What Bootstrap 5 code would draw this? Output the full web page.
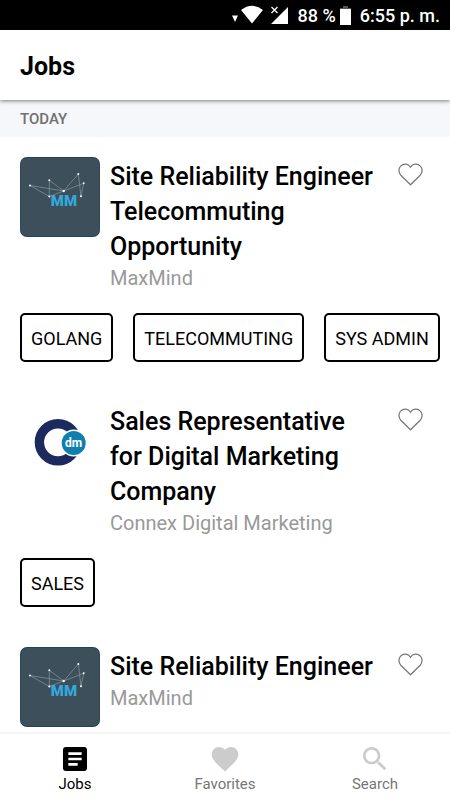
<!DOCTYPE html>
<html lang="en">
<head>
<meta charset="utf-8">
<meta name="viewport" content="width=device-width, initial-scale=1">
<title>Jobs</title>
<link href="https://cdn.jsdelivr.net/npm/bootstrap@5.3.0/dist/css/bootstrap.min.css" rel="stylesheet">
<style>
  body { font-family: Roboto, "Liberation Sans", sans-serif; color: #000; }
  .status-bar { background: #000; color: #fff; height: 30px; padding-right: 10px; font-size: 18px; font-weight: 500; line-height: 30px; }
  .status-bar span { padding-top: 2px; }
  .app-header { padding: 19px 20px 16px; box-shadow: 0 1px 4px rgba(0,0,0,.5); z-index: 1; }
  .app-header h1 { font-size: 25px; line-height: 35px; font-weight: 700; }
  .day-label { background: #f5f7fa; color: #707070; padding: 9px 20px 8px; font-size: 15px; line-height: 20px; font-weight: 500; }
  .job-item { padding: 20px; }
  .job-logo { width: 80px; height: 80px; }
  .job-body { padding-left: 10px; }
  .job-title { font-size: 25px; line-height: 35px; font-weight: 500; padding-top: 2px; }
  .job-company { font-size: 20px; line-height: 29px; color: #999; }
  .like-btn { width: 52px; height: 34px; padding: 0 0 0 20px; }
  .like-btn svg, .tab-link svg { display: block; }
  .tag-list { gap: 20px; padding-top: 20px; }
  .tag-btn { border: 2px solid #000; border-radius: 5px; padding: 11px 9px 9px; font-size: 18px; line-height: 25px; color: #000; white-space: nowrap; --bs-btn-hover-color: #000; }
  .tab-bar { border-top: 2px solid #f5f5f5; height: 68px; }
  .tab-link { color: #767676; font-size: 15px; line-height: 18px; padding-top: 9px; }
  .tab-link.active { color: #000; }
</style>
<script src="https://cdn.jsdelivr.net/npm/bootstrap@5.3.0/dist/js/bootstrap.bundle.min.js" defer></script>
</head>
<body>
<svg class="d-none" aria-hidden="true">
  <symbol id="logo-maxmind" viewBox="0 0 80 80">
    <rect width="80" height="80" rx="7" fill="#1d4552"/>
    <rect x=".5" y="1" width="79" height="78" rx="6" fill="#3c4f5a"/>
    <path d="M10 28.5 29.3 39.5V23.3L43.7 34 10 28.5M43.7 34 58.3 17 61 39.3 63.7 26.3 43.7 34 29.3 39.5" fill="none" stroke="#8b979d" stroke-width=".7"/>
    <g fill="#fff"><circle cx="10" cy="28.5" r="1"/><circle cx="29.3" cy="23.3" r="1"/><circle cx="29.3" cy="39.5" r="1"/><circle cx="43.7" cy="34" r="1.2"/><circle cx="58.3" cy="17" r="1"/><circle cx="63.7" cy="26.3" r="1"/><circle cx="61" cy="39.3" r="1"/></g>
    <text x="44" y="48.5" text-anchor="middle" font-family="Roboto, sans-serif" font-weight="900" font-size="15" fill="#35a8dc">MM</text>
  </symbol>
  <symbol id="logo-connex" viewBox="0 0 80 80">
    <circle cx="38" cy="40.3" r="18.6" fill="none" stroke="#1d2a5e" stroke-width="9.4"/>
    <circle cx="53.7" cy="41" r="13.4" fill="#fff"/>
    <circle cx="53.7" cy="41" r="12" fill="#107faf"/>
    <text x="53.5" y="45" text-anchor="middle" font-family="Roboto, sans-serif" font-weight="700" font-size="12" fill="#fff">dm</text>
  </symbol>
  <symbol id="icon-heart" viewBox="0 0 26 24">
    <path d="M13 22.7 2.9 12.8C.3 10 .3 5.7 2.7 3.2 5.7 .2 10.8 .6 13 4.5 15.2 .6 20.3 .2 23.3 3.2 25.7 5.7 25.7 10 23.1 12.8Z" fill="none" stroke="#777" stroke-width="1.3"/>
  </symbol>
</svg>

<div class="d-flex flex-column vh-100 overflow-hidden bg-white">
  <div class="status-bar d-flex align-items-center justify-content-end flex-shrink-0">
    <svg width="58" height="30" viewBox="0 0 58 30" fill="#fff" aria-hidden="true">
      <path d="M0 15.5H6L3 22ZM9 10Q20 1.500 31 10L20 23.500ZM56 7V24H39Z"/>
      <path d="m39.5 7 6 6m0-6-6 6" stroke="#fff" stroke-width="1.3"/>
    </svg>
    <span class="ms-2">88 %</span>
    <svg class="ms-1" width="12" height="30" viewBox="0 0 12 30" aria-hidden="true"><path d="M3 6h5v2h3v2H0V8h3Z" fill="#555"/><path d="M0 9h11v16H0Z" fill="#fff"/></svg>
    <span class="ms-2">6:55 p. m.</span>
  </div>

  <header class="app-header position-relative bg-white flex-shrink-0">
    <h1 class="m-0">Jobs</h1>
  </header>

  <main class="flex-fill overflow-hidden">
    <h2 class="day-label m-0">TODAY</h2>

    <article class="job-item">
      <div class="d-flex align-items-start">
        <svg class="job-logo flex-shrink-0" role="img" aria-label="MaxMind"><use href="#logo-maxmind"/></svg>
        <div class="flex-fill job-body">
          <h3 class="job-title m-0">Site Reliability Engineer Telecommuting Opportunity</h3>
          <div class="job-company">MaxMind</div>
        </div>
        <button type="button" class="btn border-0 like-btn flex-shrink-0" aria-label="Add to favorites"><svg width="25" height="23" viewBox="0 0 26 24"><use href="#icon-heart" width="26" height="24"/></svg></button>
      </div>
      <div class="tag-list d-flex">
        <button type="button" class="btn tag-btn">GOLANG</button>
        <button type="button" class="btn tag-btn">TELECOMMUTING</button>
        <button type="button" class="btn tag-btn">SYS ADMIN</button>
      </div>
    </article>

    <article class="job-item">
      <div class="d-flex align-items-start">
        <svg class="job-logo flex-shrink-0" role="img" aria-label="Connex Digital Marketing"><use href="#logo-connex"/></svg>
        <div class="flex-fill job-body">
          <h3 class="job-title m-0">Sales Representative for Digital Marketing Company</h3>
          <div class="job-company">Connex Digital Marketing</div>
        </div>
        <button type="button" class="btn border-0 like-btn flex-shrink-0" aria-label="Add to favorites"><svg width="25" height="23" viewBox="0 0 26 24"><use href="#icon-heart" width="26" height="24"/></svg></button>
      </div>
      <div class="tag-list d-flex">
        <button type="button" class="btn tag-btn">SALES</button>
      </div>
    </article>

    <article class="job-item">
      <div class="d-flex align-items-start">
        <svg class="job-logo flex-shrink-0" role="img" aria-label="MaxMind"><use href="#logo-maxmind"/></svg>
        <div class="flex-fill job-body">
          <h3 class="job-title m-0">Site Reliability Engineer</h3>
          <div class="job-company">MaxMind</div>
        </div>
        <button type="button" class="btn border-0 like-btn flex-shrink-0" aria-label="Add to favorites"><svg width="25" height="23" viewBox="0 0 26 24"><use href="#icon-heart" width="26" height="24"/></svg></button>
      </div>
    </article>
  </main>

  <nav class="tab-bar row g-0 bg-white flex-shrink-0" aria-label="Main">
    <a href="#jobs" class="tab-link active col d-flex flex-column align-items-center text-decoration-none" aria-current="page">
      <svg width="32" height="32" viewBox="0 0 24 24"><path fill="#000" d="M19 3H5c-1.100 0-2 .9-2 2v14c0 1.100.9 2 2 2h14c1.100 0 2-.9 2-2V5c0-1.100-.9-2-2-2zm-5 14H7v-2h7v2zm3-4H7v-2h10v2zm0-4H7V7h10v2z"/></svg>
      <span>Jobs</span>
    </a>
    <a href="#favorites" class="tab-link col d-flex flex-column align-items-center text-decoration-none">
      <svg width="32" height="32" viewBox="0 0 24 24"><path fill="#ccc" d="M12 21.350l-1.450-1.320C5.400 15.360 2 12.280 2 8.500 2 5.420 4.420 3 7.500 3c1.740 0 3.410.81 4.500 2.090C13.090 3.810 14.760 3 16.500 3 19.580 3 22 5.420 22 8.500c0 3.780-3.400 6.860-8.550 11.540L12 21.350z"/></svg>
      <span>Favorites</span>
    </a>
    <a href="#search" class="tab-link col d-flex flex-column align-items-center text-decoration-none">
      <svg width="32" height="32" viewBox="0 0 24 24"><path fill="#ccc" d="M15.500 14h-.79l-.28-.27C15.410 12.590 16 11.110 16 9.500 16 5.910 13.090 3 9.500 3S3 5.910 3 9.500 5.910 16 9.500 16c1.610 0 3.090-.59 4.230-1.570l.27.28v.79l5 4.990L20.490 19l-4.990-5zm-6 0C7.010 14 5 11.990 5 9.500S7.010 5 9.500 5 14 7.010 14 9.500 11.990 14 9.500 14z"/></svg>
      <span>Search</span>
    </a>
  </nav>
</div>
</body>
</html>
